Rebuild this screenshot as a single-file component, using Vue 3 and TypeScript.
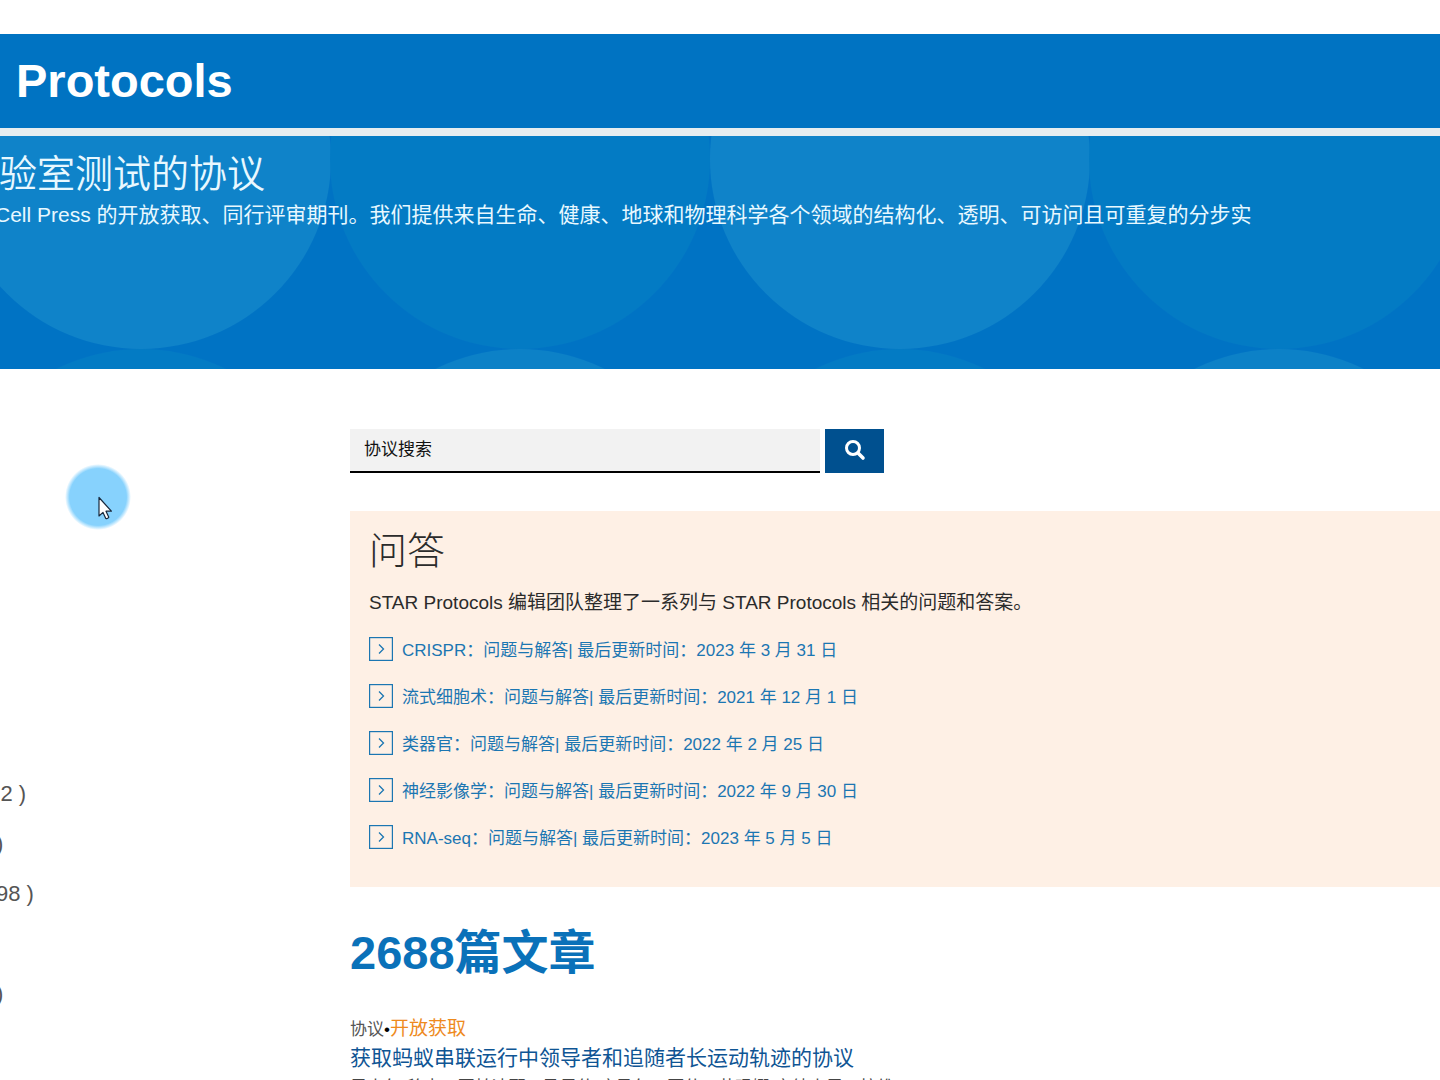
<script setup lang="ts">
interface Answer {
  topic: string
  updated: string
}

const answers: Answer[] = [
  { topic: 'CRISPR：问题与解答', updated: '2023 年 3 月 31 日' },
  { topic: '流式细胞术：问题与解答', updated: '2021 年 12 月 1 日' },
  { topic: '类器官：问题与解答', updated: '2022 年 2 月 25 日' },
  { topic: '神经影像学：问题与解答', updated: '2022 年 9 月 30 日' },
  { topic: 'RNA-seq：问题与解答', updated: '2023 年 5 月 5 日' },
]

// Tail ends of the filter counts that show beside the results
const counts: string[] = ['\u20092 )', ')', '98 )', '', ')']
</script>

<template>
  <div class="page">
    <header class="masthead">
      <span class="brand">Protocols</span>
    </header>

    <section class="hero">
      <svg class="bubbles" width="100%" height="100%" aria-hidden="true">
        <defs>
          <pattern id="bubbles" x="-49" y="-167" width="759" height="759" patternUnits="userSpaceOnUse">
            <circle cx="190" cy="190" r="190" fill="#0f83c9" />
            <circle cx="569" cy="190" r="190" fill="#037bc4" />
            <circle cx="190" cy="570" r="190" fill="#037bc4" />
            <circle cx="569" cy="570" r="190" fill="#0c81c7" />
          </pattern>
        </defs>
        <rect width="100%" height="100%" fill="url(#bubbles)" />
      </svg>
      <div class="hero-text">
        <h1>验室测试的协议</h1>
        <p>Cell Press 的开放获取、同行评审期刊。我们提供来自生命、健康、地球和物理科学各个领域的结构化、透明、可访问且可重复的分步实</p>
      </div>
    </section>

    <div class="body">
      <aside class="filters">
        <ul>
          <li v-for="(count, i) in counts" :key="i">{{ count }}</li>
        </ul>
      </aside>

      <main class="results">
        <form class="search" @submit.prevent>
          <input type="text" placeholder="协议搜索" aria-label="协议搜索" />
          <button type="submit" aria-label="搜索">
            <svg width="22" height="22" viewBox="0 0 22 22" aria-hidden="true">
              <circle cx="9" cy="9" r="6.5" fill="none" stroke="#fff" stroke-width="3" />
              <path d="M14 14l5 5" stroke="#fff" stroke-width="3.6" stroke-linecap="round" />
            </svg>
          </button>
        </form>

        <section class="panel">
          <h2>问答</h2>
          <p>STAR Protocols 编辑团队整理了一系列与 STAR Protocols 相关的问题和答案。</p>
          <ul>
            <li v-for="answer in answers" :key="answer.topic">
              <a href="#">
                <svg width="24" height="24" viewBox="0 0 24 24" fill="none" stroke="currentColor" aria-hidden="true">
                  <rect x="0.6" y="0.6" width="22.8" height="22.8" stroke-width="1.2" />
                  <path d="M10 7.5l4.5 4.5-4.5 4.5" stroke-width="1.3" />
                </svg>
                <span>{{ answer.topic }}| 最后更新时间：{{ answer.updated }}</span>
              </a>
            </li>
          </ul>
        </section>

        <h2 class="total">2688篇文章</h2>

        <article>
          <div class="kind">协议<b>•</b><span>开放获取</span></div>
          <h3><a href="#">获取蚂蚁串联运行中领导者和追随者长运动轨迹的协议</a></h3>
          <div class="authors">恩吉尔·穆克、夏帕迪耶、马尼什·库马尔、亚什、苏玛娜·安纳吉里、拉维</div>
        </article>
      </main>
    </div>

    <svg class="pointer" width="66" height="66" viewBox="0 0 66 66" aria-hidden="true">
      <defs>
        <radialGradient id="halo">
          <stop offset="0.86" stop-color="#87d2fd" />
          <stop offset="1" stop-color="#87d2fd" stop-opacity="0" />
        </radialGradient>
      </defs>
      <circle cx="33" cy="33" r="33" fill="url(#halo)" />
      <path
        d="M34 33.5v18.5l4-3.6 2.8 6q1.8.7 3-1.2l-2.8-6h5.4z"
        fill="#fff"
        stroke="#18283c"
        stroke-width="1.2"
        stroke-linejoin="round"
      />
    </svg>
  </div>
</template>

<style>
body {
  margin: 0;
  background: #fff;
}
</style>

<style scoped>
.page {
  position: relative;
  max-height: 100vh;
  padding-top: 34px;
  box-sizing: border-box;
  overflow: hidden;
  font-family: 'Liberation Sans', 'Noto Sans CJK SC', sans-serif;
  color: #2b2b2b;
}

h1,
h2,
h3,
p,
ul {
  margin: 0;
  padding: 0;
  font-weight: 400;
}

ul {
  list-style: none;
}

a {
  text-decoration: none;
}

.masthead {
  display: flex;
  align-items: center;
  height: 94px;
  padding-left: 16px;
  background: #0073c2;
  border-bottom: 8px solid #e6edf0;
}

.brand {
  font-size: 47px;
  font-weight: 700;
  line-height: 56px;
  color: #fff;
}

.hero {
  position: relative;
  height: 233px;
  background: #0073c4;
  color: #e8f8ff;
}

.bubbles {
  position: absolute;
  inset: 0;
}

.hero-text {
  position: relative;
  margin-left: -5px;
  padding-top: 16px;
}

.hero h1 {
  padding-left: 4px;
  font-size: 38px;
  font-weight: 350;
  line-height: 44px;
}

.hero p {
  font-size: 21px;
  line-height: 38px;
  white-space: nowrap;
}

.body {
  display: flex;
}

.filters {
  flex: 0 0 350px;
  padding-top: 400px;
}

.filters ul {
  margin-left: -4px;
}

.filters li {
  height: 50px;
  font-size: 22px;
  line-height: 50px;
  color: #555;
}

.results {
  flex: 1;
  min-width: 0;
  padding-top: 60px;
}

.search {
  display: flex;
  gap: 5px;
  height: 44px;
}

.search input {
  width: 470px;
  box-sizing: border-box;
  padding: 0 14px;
  border: 0;
  border-bottom: 2px solid #000;
  border-radius: 0;
  background: #f2f2f2;
  font: inherit;
  font-size: 17px;
}

.search input::placeholder {
  color: #111;
  opacity: 1;
}

.search button {
  display: flex;
  align-items: center;
  justify-content: center;
  width: 59px;
  padding: 0 0 3px;
  border: 0;
  background: #00508f;
}

.panel {
  margin-top: 38px;
  padding: 16px 19px 27px;
  background: #fef0e5;
}

.panel h2 {
  font-size: 38px;
  font-weight: 300;
  line-height: 48px;
}

.panel p {
  margin: 14px 0 8px;
  font-size: 19px;
  line-height: 28px;
}

.panel li a {
  display: flex;
  align-items: center;
  gap: 9px;
  height: 47px;
  font-size: 17px;
  color: #1b76b2;
}

.total {
  margin-top: 34px;
  font-size: 47px;
  font-weight: 700;
  line-height: 64px;
  color: #0a71b9;
}

article {
  margin-top: 30px;
}

.kind {
  font-size: 17px;
  line-height: 28px;
  color: #555;
}

.kind b {
  font-weight: 400;
  color: #000;
}

.kind span {
  font-size: 19px;
  color: #ee8a1d;
}

article h3 {
  font-size: 21px;
  line-height: 28px;
}

article h3 a {
  color: #0f5594;
}

.authors {
  font-size: 17px;
  line-height: 32px;
  color: #444;
}

.pointer {
  position: absolute;
  left: 65px;
  top: 464px;
}
</style>
